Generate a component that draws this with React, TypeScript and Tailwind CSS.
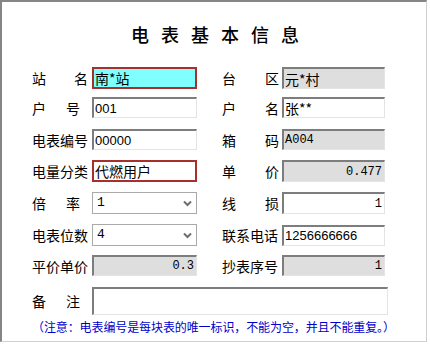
import React from "react";

const cjk = "font-['Noto_Sans_CJK_SC','Noto_Sans_CJK_SC',sans-serif]";
const mono = "font-['Liberation_Mono',monospace]";
const sans = "font-['Liberation_Sans',sans-serif]";

const sunken =
  "border-t-2 border-l-2 border-t-[#7d7d7d] border-l-[#7d7d7d] border-r border-b border-r-[#e4e4e4] border-b-[#e4e4e4]";

function Label2({ a, b, w }: { a: string; b: string; w: string }) {
  return (
    <div className="w-[60px] shrink-0">
      <div className={`flex justify-between ${w} text-[14px] leading-none text-black ${cjk}`}>
        <span>{a}</span>
        <span>{b}</span>
      </div>
    </div>
  );
}

function Label4({ t }: { t: string }) {
  return (
    <div className={`w-[60px] shrink-0 text-[14px] leading-none text-black ${cjk}`}>{t}</div>
  );
}

function Box({
  children,
  kind,
  w,
  h = "h-[22px]",
  align = "left",
  font = cjk,
}: {
  children?: React.ReactNode;
  kind: "white" | "gray" | "red";
  w: string;
  h?: string;
  align?: "left" | "right";
  font?: string;
}) {
  const base =
    kind === "red"
      ? "border-2 border-[#a8302c] bg-white"
      : `${sunken} ${kind === "gray" ? "bg-[#dedede]" : "bg-white"}`;
  return (
    <div
      className={`${w} ${h} ${base} flex items-center ${
        align === "right" ? "justify-end pr-[2px]" : "justify-start pl-[1px]"
      } overflow-hidden text-black ${font}`}
    >
      {children}
    </div>
  );
}

function Select({ v }: { v: string }) {
  return (
    <div
      className={`w-[105px] h-[22px] border border-[#a9a9a9] bg-white flex items-center justify-between pl-[4px] pr-[4px] text-[13px] text-black ${mono}`}
    >
      <span>{v}</span>
      <svg width="9" height="7" viewBox="0 0 9 7">
        <path d="M1 1.5 L4.5 5 L8 1.5" fill="none" stroke="#6e6e6e" strokeWidth="2" />
      </svg>
    </div>
  );
}

export default function App() {
  return (
    <div className="w-[430px] h-[345px] bg-white">
      <div className="w-[427px] h-[342px] border-l-2 border-t-2 border-l-[#858585] border-t-[#858585] border-r border-b border-r-[#cfcfcf] border-b-[#cfcfcf]">
        <div className="flex justify-center pt-[21px] pl-[14px]">
          <div className={`text-[18px] leading-[22px] tracking-[12px] text-black font-medium ${cjk}`}>
            电表基本信息
          </div>
        </div>

        <div className="pl-[30px] pt-[22px] flex flex-col">
          <div className="flex items-center">
            <Label2 a="站" b="名" w="w-[56px]" />
            <div className="w-[105px] h-[22px] border-2 border-[#a8302c] bg-[#80ffff] flex items-center pl-[1px]">
              <span className={`text-[14px] leading-none text-black ${cjk}`}>南*站</span>
            </div>
            <div className="w-[25px]" />
            <Label2 a="台" b="区" w="w-[57px]" />
            <Box kind="gray" w="w-[103px]">
              <span className="text-[14px] leading-none">元*村</span>
            </Box>
          </div>
          <div className="flex items-center mt-[8px]">
            <Label2 a="户" b="号" w="w-[48px]" />
            <Box kind="white" w="w-[105px]" h="h-[21px]" font={sans}>
              <span className="text-[13px] leading-none">001</span>
            </Box>
            <div className="w-[25px]" />
            <Label2 a="户" b="名" w="w-[57px]" />
            <Box kind="white" w="w-[103px]" h="h-[21px]">
              <span className="text-[14px] leading-none">张**</span>
            </Box>
          </div>
          <div className="flex items-center mt-[11px]">
            <Label4 t="电表编号" />
            <Box kind="white" w="w-[105px]" h="h-[21px]" font={sans}>
              <span className="text-[13px] leading-none">00000</span>
            </Box>
            <div className="w-[25px]" />
            <Label2 a="箱" b="码" w="w-[57px]" />
            <Box kind="gray" w="w-[103px]" h="h-[21px]" font={mono}>
              <span className="text-[12px] leading-none">A004</span>
            </Box>
          </div>
          <div className="flex items-center mt-[10px]">
            <Label4 t="电量分类" />
            <Box kind="red" w="w-[105px]">
              <span className="text-[14px] leading-none">代燃用户</span>
            </Box>
            <div className="w-[25px]" />
            <Label2 a="单" b="价" w="w-[57px]" />
            <Box kind="gray" w="w-[103px]" align="right" font={mono}>
              <span className="text-[12px] leading-none">0.477</span>
            </Box>
          </div>
          <div className="flex items-center mt-[10px]">
            <Label2 a="倍" b="率" w="w-[48px]" />
            <Select v="1" />
            <div className="w-[25px]" />
            <Label2 a="线" b="损" w="w-[57px]" />
            <Box kind="white" w="w-[103px]" align="right" font={mono}>
              <span className="text-[12px] leading-none">1</span>
            </Box>
          </div>
          <div className="flex items-center mt-[10px]">
            <Label4 t="电表位数" />
            <Select v="4" />
            <div className="w-[25px]" />
            <Label4 t="联系电话" />
            <Box kind="white" w="w-[103px]" h="h-[21px]" font={sans}>
              <span className="text-[13px] leading-none">1256666666</span>
            </Box>
          </div>
          <div className="flex items-center mt-[9px]">
            <Label4 t="平价单价" />
            <Box kind="gray" w="w-[105px]" h="h-[21px]" align="right" font={mono}>
              <span className="text-[12px] leading-none">0.3</span>
            </Box>
            <div className="w-[25px]" />
            <Label4 t="抄表序号" />
            <Box kind="gray" w="w-[103px]" h="h-[21px]" align="right" font={mono}>
              <span className="text-[12px] leading-none">1</span>
            </Box>
          </div>
          <div className="flex items-center mt-[11px]">
            <Label2 a="备" b="注" w="w-[48px]" />
            <Box kind="white" w="w-[296px]" h="h-[28px]" />
          </div>
          <div className={`mt-[4px] text-[12px] leading-[16px] tracking-[-0.1px] text-[#0000cc] ${cjk}`}>
            （注意：电表编号是每块表的唯一标识，不能为空，并且不能重复。）
          </div>
        </div>
      </div>
    </div>
  );
}
